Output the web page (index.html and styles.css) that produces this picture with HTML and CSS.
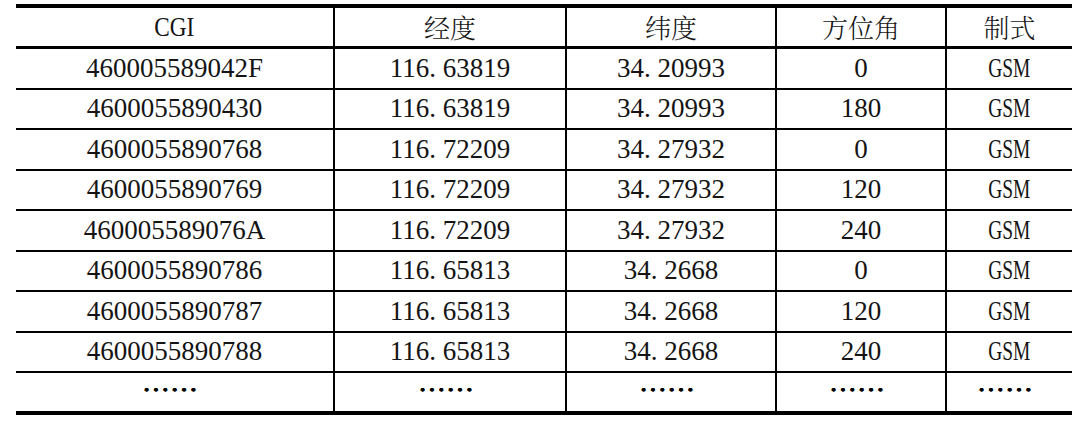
FILE: index.html
```html
<!DOCTYPE html>
<html lang="zh-CN">
<head>
<meta charset="utf-8">
<title>CGI 表</title>
<link rel="stylesheet" href="styles.css">
</head>
<body>
<div class="tbl">
  <div class="row head">
    <div class="c"><span class="n cgi">CGI</span></div>
    <div class="c zh">经度</div>
    <div class="c zh">纬度</div>
    <div class="c zh">方位角</div>
    <div class="c zh">制式</div>
  </div>
  <div class="row">
    <div class="c">460005589042F</div>
    <div class="c">116<span class="p">.</span>63819</div>
    <div class="c">34<span class="p">.</span>20993</div>
    <div class="c">0</div>
    <div class="c"><span class="n gsm">GSM</span></div>
  </div>
  <div class="row">
    <div class="c">4600055890430</div>
    <div class="c">116<span class="p">.</span>63819</div>
    <div class="c">34<span class="p">.</span>20993</div>
    <div class="c">180</div>
    <div class="c"><span class="n gsm">GSM</span></div>
  </div>
  <div class="row">
    <div class="c">4600055890768</div>
    <div class="c">116<span class="p">.</span>72209</div>
    <div class="c">34<span class="p">.</span>27932</div>
    <div class="c">0</div>
    <div class="c"><span class="n gsm">GSM</span></div>
  </div>
  <div class="row">
    <div class="c">4600055890769</div>
    <div class="c">116<span class="p">.</span>72209</div>
    <div class="c">34<span class="p">.</span>27932</div>
    <div class="c">120</div>
    <div class="c"><span class="n gsm">GSM</span></div>
  </div>
  <div class="row">
    <div class="c">460005589076A</div>
    <div class="c">116<span class="p">.</span>72209</div>
    <div class="c">34<span class="p">.</span>27932</div>
    <div class="c">240</div>
    <div class="c"><span class="n gsm">GSM</span></div>
  </div>
  <div class="row">
    <div class="c">4600055890786</div>
    <div class="c">116<span class="p">.</span>65813</div>
    <div class="c">34<span class="p">.</span>2668</div>
    <div class="c">0</div>
    <div class="c"><span class="n gsm">GSM</span></div>
  </div>
  <div class="row">
    <div class="c">4600055890787</div>
    <div class="c">116<span class="p">.</span>65813</div>
    <div class="c">34<span class="p">.</span>2668</div>
    <div class="c">120</div>
    <div class="c"><span class="n gsm">GSM</span></div>
  </div>
  <div class="row">
    <div class="c">4600055890788</div>
    <div class="c">116<span class="p">.</span>65813</div>
    <div class="c">34<span class="p">.</span>2668</div>
    <div class="c">240</div>
    <div class="c"><span class="n gsm">GSM</span></div>
  </div>
  <div class="row last">
    <div class="c el"><span class="dots">……</span></div>
    <div class="c el"><span class="dots">……</span></div>
    <div class="c el"><span class="dots">……</span></div>
    <div class="c el"><span class="dots">……</span></div>
    <div class="c el"><span class="dots">……</span></div>
  </div>
</div>
</body>
</html>
```
FILE: styles.css
```css
html, body {
  margin: 0;
  padding: 0;
  background: #ffffff;
}

.tbl {
  margin: 4px 0 0 16px;
  width: 1056px;
  border-top: 4px solid #000;
  border-bottom: 4px solid #000;
  font-family: "Liberation Serif", "Noto Serif CJK SC", "Noto Sans CJK SC", serif;
  font-size: 27px;
  color: #141414;
}

.row {
  display: grid;
  grid-template-columns: 317px 232px 210px 170px 127px;
  box-sizing: border-box;
  height: 40.5px;
  border-bottom: 2px solid #000;
}

.row.head {
  height: 41px;
  border-bottom-width: 3px;
}

.row.last {
  height: 38px;
  border-bottom: none;
}

.c {
  display: flex;
  align-items: center;
  justify-content: center;
  white-space: nowrap;
  line-height: 1;
}

.c + .c {
  border-left: 2px solid #000;
}

.zh {
  font-family: "Noto Serif CJK SC", "Noto Sans CJK SC", serif;
  font-size: 26px;
  font-weight: 300;
}

.p {
  padding-right: 0.25em;
}

.n {
  display: inline-block;
}

.gsm {
  transform: scaleX(0.72);
}

.cgi {
  transform: scaleX(0.86);
}

.el {
  font-family: "Noto Serif CJK SC", "Noto Sans CJK SC", sans-serif;
  font-size: 26px;
  font-weight: 900;
  color: #000;
}

.dots {
  display: inline-block;
  transform: translate(-4px, -3px) scale(1.08);
  text-shadow: 0.4px 0 0 #000, -0.4px 0 0 #000;
}
```
